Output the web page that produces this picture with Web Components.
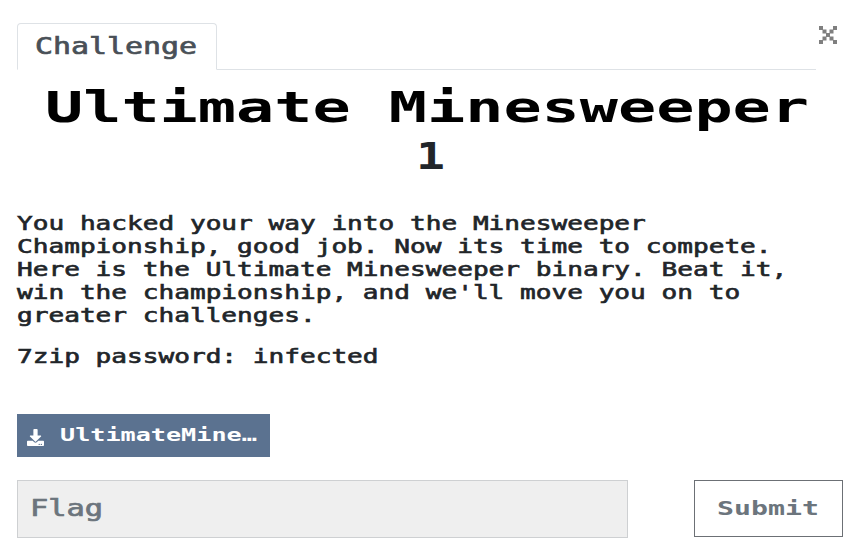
<!DOCTYPE html>
<html lang="en"><head><meta charset="utf-8"><title>Challenge</title>
<style>html,body{margin:0;background:#fff}</style></head><body>
<challenge-modal></challenge-modal>
<script>
const define=(name,html,setup)=>customElements.define(name,class extends HTMLElement{
  constructor(){super();this.attachShadow({mode:'open'}).innerHTML=html;}
  connectedCallback(){if(setup)setup(this);}
});
// One line of fixed-pitch text, stretched horizontally to the requested pitch.
define('wide-text',`<style>
:host{display:block;white-space:pre;font-family:"DejaVu Sans Mono",monospace;overflow:visible}
span{display:block;width:max-content;transform-origin:0 50%}
</style><span><slot></slot></span>`,el=>{
  const size=+el.getAttribute('size'),pitch=+el.getAttribute('pitch');
  const s=el.shadowRoot.querySelector('span');
  el.style.fontSize=size+'px';
  el.style.width=pitch*el.textContent.length+'px';
  s.style.transform='scaleX('+pitch/(size*.60205)+')';
});
define('tab-bar',`<style>
:host{display:flex;align-items:flex-start;justify-content:space-between}
.line{width:799px;height:46px;border-bottom:1px solid #dee2e6;display:flex}
.tab{box-sizing:border-box;width:200px;height:47px;border:1px solid #dee2e6;border-bottom-color:#fff;border-radius:4px 4px 0 0;background:#fff;padding:8px 0 0 17px;color:#495057;line-height:28px}
wide-text{-webkit-text-stroke:.7px}
svg{display:block;margin:3px 6px 0 0}
</style><div class="line"><div class="tab"><wide-text size="23.3" pitch="18">Challenge</wide-text></div></div>
<svg width="18" height="18" viewBox="0 0 18 18" fill="#7f7f7f"><path d="M0 0h4v4H0zM14 0h4v4h-4zM3.5 3.5h4v4h-4zM10.5 3.5h4v4h-4zM7 7h4v4H7zM3.5 10.5h4v4h-4zM10.5 10.5h4v4h-4zM0 14h4v4H0zM14 14h4v4h-4z"/></svg>`);
define('challenge-heading',`<style>
:host{display:flex;flex-direction:column;align-items:center}
.name{color:#000;font-weight:bold;line-height:56px;margin-right:6px}
.value{color:#212529;font-weight:bold;line-height:46px;margin:-3px 0 3px}
</style><wide-text class="name" size="42" pitch="38.2">Ultimate Minesweeper</wide-text><wide-text class="value" size="38" pitch="29">1</wide-text>`);
define('challenge-description',`<style>
:host{display:flex;flex-direction:column;color:#212529;line-height:23px;-webkit-text-stroke:.6px}
.gap{margin-top:18px}
</style>`+['You hacked your way into the Minesweeper','Championship, good job. Now its time to compete.','Here is the Ultimate Minesweeper binary. Beat it,',"win the championship, and we'll move you on to",'greater challenges.','7zip password: infected'].map((t,i)=>`<wide-text size="19" pitch="15.72"${i==5?' class="gap"':''}>${t}</wide-text>`).join(''));
define('file-button',`<style>
:host{box-sizing:border-box;display:flex;align-items:center;width:253px;height:43px;background:#5b7290;color:#fff;padding-left:10px;font-weight:bold;line-height:24px}
svg{margin:3px 16px 0 0;flex:none}
wide-text{margin-top:-2px}
</style><svg width="17" height="17" viewBox="0 0 512 512" fill="#fff"><path d="M216 0h80c13 0 24 11 24 24v168h88c18 0 27 22 14 34L270 378c-7 7-20 7-28 0L90 226c-13-12-4-34 14-34h88V24c0-13 11-24 24-24zm296 376v112c0 13-11 24-24 24H24c-13 0-24-11-24-24V376c0-13 11-24 24-24h147l49 49c20 20 52 20 72 0l49-49h147c13 0 24 11 24 24zM388 464a20 20 0 1 0-40 0 20 20 0 0 0 40 0zm64 0a20 20 0 1 0-40 0 20 20 0 0 0 40 0z"/></svg><wide-text size="17.7" pitch="15.15">UltimateMine…</wide-text>`);
define('flag-form',`<style>
:host{display:flex;align-items:flex-start;gap:66px;color:#6c757d}
.input,.submit{box-sizing:border-box;display:flex;align-items:center}
.input{width:611px;height:58px;background:#efefef;border:1px solid #ced0d2;padding:0 0 3px 12px}
.submit{width:149px;height:57px;border:1px solid #6c7075;padding-left:22px;font-weight:bold}
.input wide-text{-webkit-text-stroke:.7px}
</style><div class="input"><wide-text size="22.7" pitch="18.3">Flag</wide-text></div><div class="submit"><wide-text size="19.3" pitch="17">Submit</wide-text></div>`);
define('challenge-modal',`<style>
:host{display:flex;flex-direction:column;box-sizing:border-box;width:852px;height:554px;padding:23px 9px 0 17px;background:#fff;overflow:hidden}
challenge-heading{margin-top:10px}
challenge-description{margin-top:30px}
file-button{margin-top:46px}
flag-form{margin-top:23px}
</style><tab-bar></tab-bar><challenge-heading></challenge-heading><challenge-description></challenge-description><file-button></file-button><flag-form></flag-form>`);
</script></body></html>
